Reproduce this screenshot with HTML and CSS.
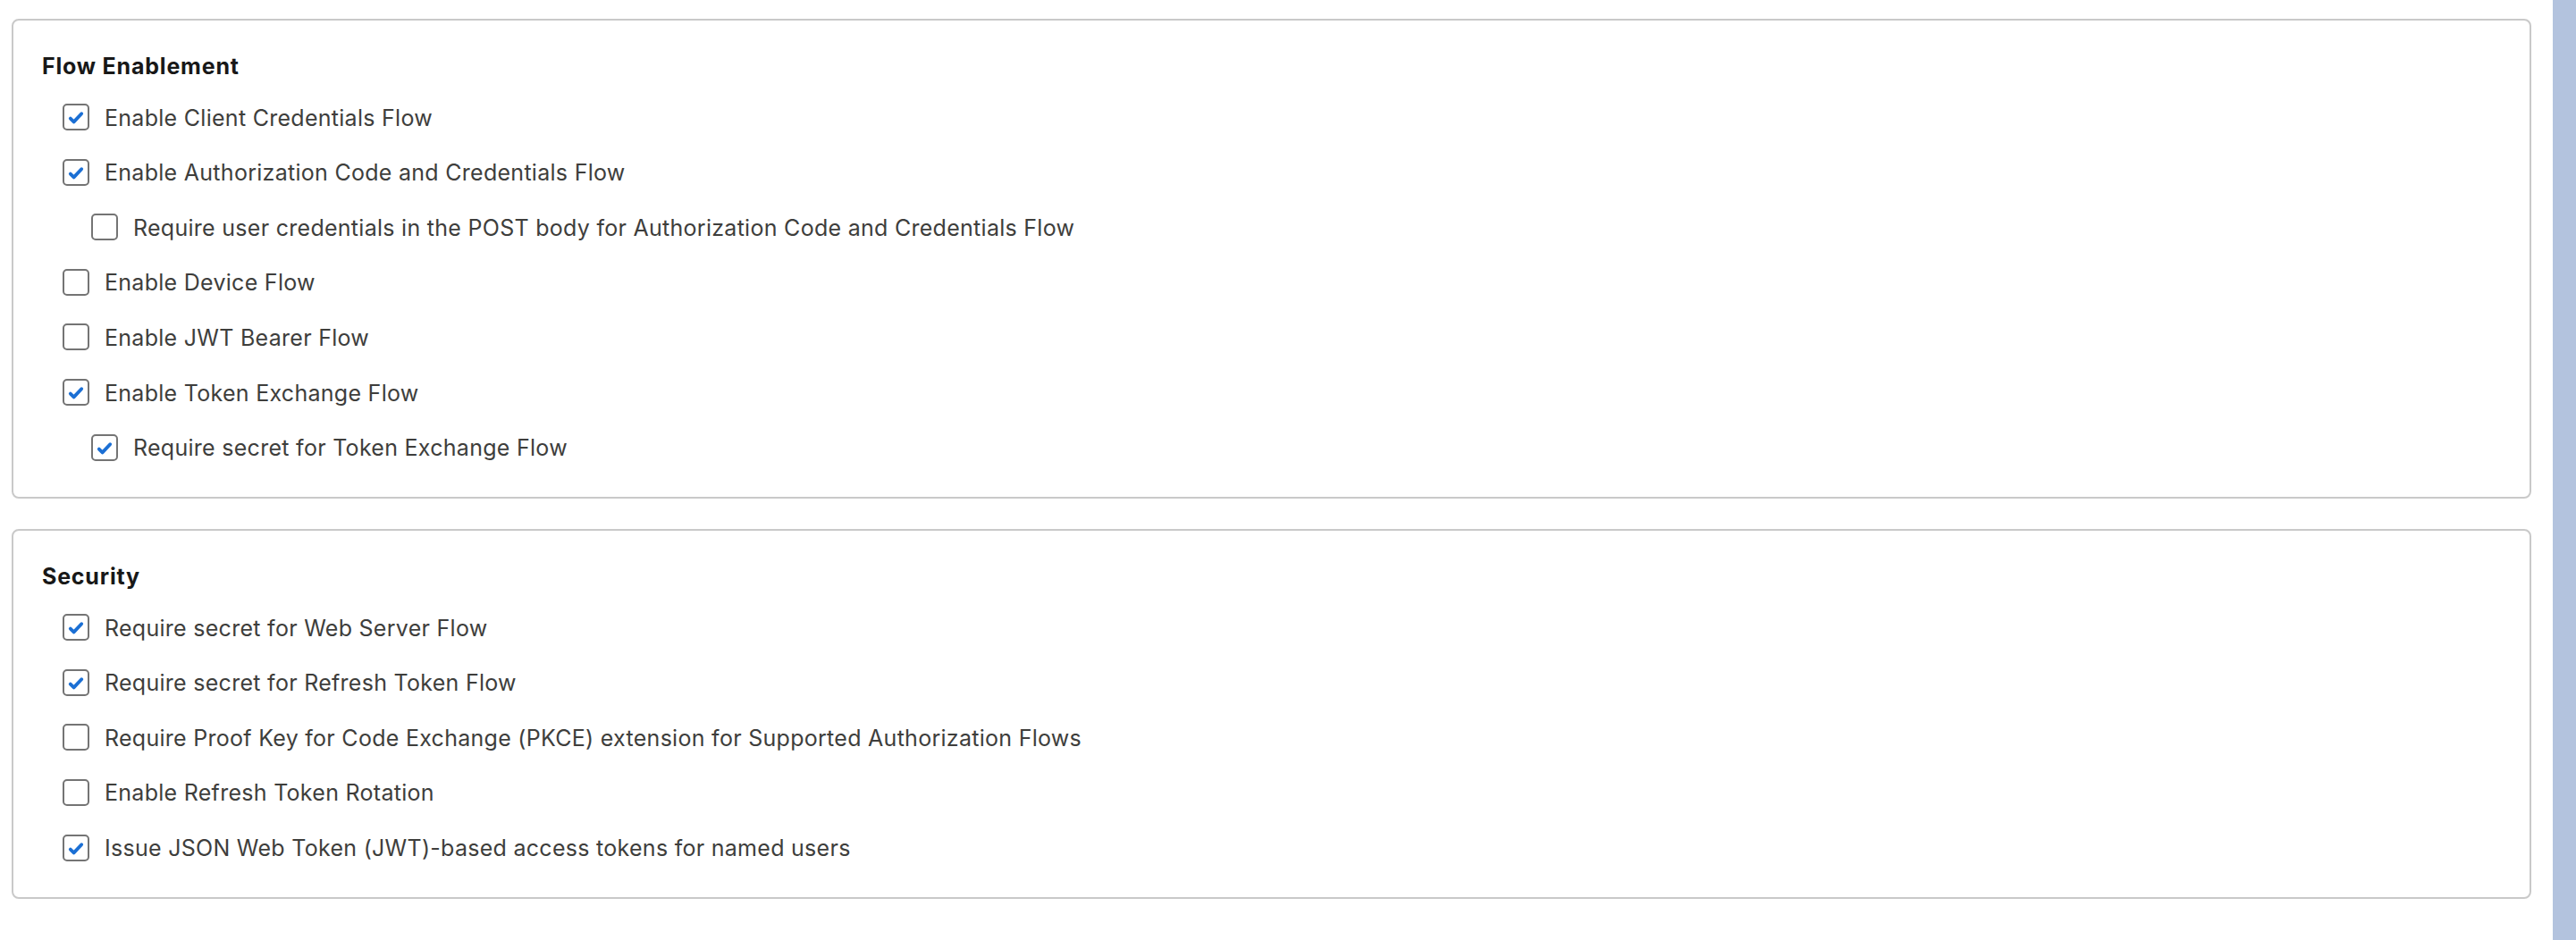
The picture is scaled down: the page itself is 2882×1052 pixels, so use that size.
FILE: index.html
```html
<!DOCTYPE html>
<html lang="en">
<head>
<meta charset="utf-8">
<title>OAuth Settings</title>
<link rel="stylesheet" href="styles.css">
</head>
<body>
<div class="page">
  <section class="card">
    <h2 class="card-title">Flow Enablement</h2>
    <div class="row"><span class="cb on"><svg viewBox="0 0 30 30"><path d="M8.8 16.6 L12.6 20.4 L21.2 11.2"/></svg></span><span class="label">Enable Client Credentials Flow</span></div>
    <div class="row"><span class="cb on"><svg viewBox="0 0 30 30"><path d="M8.8 16.6 L12.6 20.4 L21.2 11.2"/></svg></span><span class="label">Enable Authorization Code and Credentials Flow</span></div>
    <div class="row nested"><span class="cb"></span><span class="label">Require user credentials in the POST body for Authorization Code and Credentials Flow</span></div>
    <div class="row"><span class="cb"></span><span class="label">Enable Device Flow</span></div>
    <div class="row"><span class="cb"></span><span class="label">Enable JWT Bearer Flow</span></div>
    <div class="row"><span class="cb on"><svg viewBox="0 0 30 30"><path d="M8.8 16.6 L12.6 20.4 L21.2 11.2"/></svg></span><span class="label">Enable Token Exchange Flow</span></div>
    <div class="row nested"><span class="cb on"><svg viewBox="0 0 30 30"><path d="M8.8 16.6 L12.6 20.4 L21.2 11.2"/></svg></span><span class="label">Require secret for Token Exchange Flow</span></div>
  </section>
  <section class="card">
    <h2 class="card-title">Security</h2>
    <div class="row"><span class="cb on"><svg viewBox="0 0 30 30"><path d="M8.8 16.6 L12.6 20.4 L21.2 11.2"/></svg></span><span class="label">Require secret for Web Server Flow</span></div>
    <div class="row"><span class="cb on"><svg viewBox="0 0 30 30"><path d="M8.8 16.6 L12.6 20.4 L21.2 11.2"/></svg></span><span class="label">Require secret for Refresh Token Flow</span></div>
    <div class="row"><span class="cb"></span><span class="label">Require Proof Key for Code Exchange (PKCE) extension for Supported Authorization Flows</span></div>
    <div class="row"><span class="cb"></span><span class="label">Enable Refresh Token Rotation</span></div>
    <div class="row"><span class="cb on"><svg viewBox="0 0 30 30"><path d="M8.8 16.6 L12.6 20.4 L21.2 11.2"/></svg></span><span class="label">Issue JSON Web Token (JWT)-based access tokens for named users</span></div>
  </section>
</div>
<div class="scrollbar"></div>
</body>
</html>
```
FILE: styles.css
```css
html, body {
  margin: 0;
  height: 100%;
  background: #ffffff;
}
body {
  display: flex;
  font-family: Inter, "Open Sans", "Liberation Sans", sans-serif;
}
.page {
  flex: 1;
  padding: 21px 24px 0 13px;
}
.card {
  border: 2px solid #c9c9c9;
  border-radius: 8px;
  padding: 36px 32px 24.6px 32px;
  background: #ffffff;
}
.card + .card {
  margin-top: 34px;
}
.card-title {
  margin: 0 0 11.3px 0;
  font-size: 25px;
  line-height: 30px;
  font-weight: 700;
  letter-spacing: 0.8px;
  color: #181818;
}
.row {
  display: flex;
  align-items: center;
  height: 61.6px;
  padding-left: 23px;
}
.row.nested {
  padding-left: 55px;
}
.cb {
  flex: none;
  box-sizing: border-box;
  width: 30px;
  height: 30px;
  border: 2px solid #747474;
  border-radius: 5px;
  background: #fff;
  position: relative;
}
.cb svg {
  position: absolute;
  left: -2px;
  top: -2px;
  width: 30px;
  height: 30px;
}
.cb svg path {
  fill: none;
  stroke: #1b6fd4;
  stroke-width: 3.8;
  stroke-linecap: round;
  stroke-linejoin: round;
}
.label {
  margin-left: 17px;
  margin-top: 1px;
  font-size: 25px;
  line-height: 30px;
  letter-spacing: 0.28px;
  color: #3e3e3c;
  white-space: nowrap;
}
.scrollbar {
  flex: none;
  width: 26px;
  background: #b3c3de;
}
```
